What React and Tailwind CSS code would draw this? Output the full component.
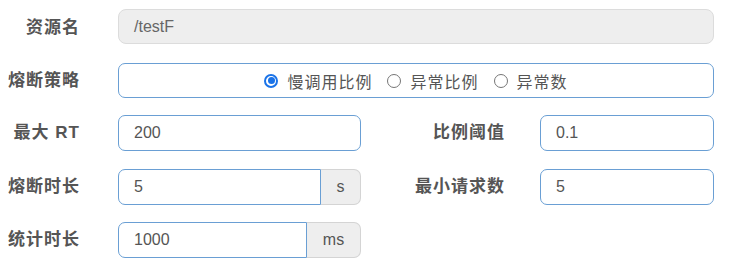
import React from 'react';

const labelCls =
  "text-right font-bold text-[17px] tracking-[1px] text-[#555] font-['Liberation_Sans','Noto_Sans_CJK_SC',sans-serif]";
const inputCls =
  "h-full rounded-[7px] border border-[#6a9fd4] bg-white px-[15px] text-[16px] text-[#555] outline-none font-['Liberation_Sans',sans-serif]";

const Radio = ({ checked, label }) => (
  <label className="flex items-center gap-[9px]">
    <span
      className={
        checked
          ? 'flex h-[14px] w-[14px] items-center justify-center rounded-full border-2 border-[#1a73e8] bg-white'
          : 'h-[14px] w-[14px] rounded-full border border-[#767676] bg-white'
      }
    >
      {checked && <span className="h-[7px] w-[7px] rounded-full bg-[#1a73e8]" />}
    </span>
    <span>{label}</span>
  </label>
);

const Addon = ({ value, unit, inputW, unitW }) => (
  <div className="flex h-[36px]">
    <div
      className={`${inputCls} flex items-center rounded-r-none`}
      style={{ width: inputW }}
    >
      {value}
    </div>
    <div
      className="flex h-full items-center justify-center rounded-r-[7px] border border-l-0 border-[#d4d4d4] bg-[#eeeeee] text-[16px] text-[#555] font-['Liberation_Sans',sans-serif]"
      style={{ width: unitW }}
    >
      {unit}
    </div>
  </div>
);

export default function App() {
  return (
    <div className="flex h-[268px] w-[743px] flex-col bg-white pt-[9px] font-['Liberation_Sans','Noto_Sans_CJK_SC',sans-serif]">
      {/* 资源名 */}
      <div className="flex h-[35px] items-center">
        <div className={`${labelCls} w-[80px] pt-[3px]`}>资源名</div>
        <div className="ml-[38px] flex h-full w-[596px] items-center rounded-[8px] border border-[#dcdcdc] bg-[#eeeeee] px-[15px] text-[16px] text-[#666] font-['Liberation_Sans',sans-serif]">
          /testF
        </div>
      </div>

      {/* 熔断策略 */}
      <div className="mt-[19px] flex h-[35px] items-center">
        <div className={`${labelCls} w-[80px]`}>熔断策略</div>
        <div className="ml-[38px] flex h-full w-[596px] items-center justify-center gap-[15px] rounded-[7px] border border-[#6a9fd4] bg-white text-[16px] tracking-[1px] text-[#555] font-['Noto_Sans_CJK_SC',sans-serif]">
          <Radio checked label="慢调用比例" />
          <Radio label="异常比例" />
          <Radio label="异常数" />
        </div>
      </div>

      {/* 最大 RT / 比例阈值 */}
      <div className="mt-[17px] flex h-[36px] items-center">
        <div className={`${labelCls} w-[80px]`}>最大 RT</div>
        <div className={`${inputCls} ml-[38px] flex w-[243px] items-center`}>200</div>
        <div className={`${labelCls} w-[144px]`}>比例阈值</div>
        <div className={`${inputCls} ml-[35px] flex w-[174px] items-center`}>0.1</div>
      </div>

      {/* 熔断时长 / 最小请求数 */}
      <div className="mt-[18px] flex h-[36px] items-center">
        <div className={`${labelCls} w-[80px]`}>熔断时长</div>
        <div className="ml-[38px]">
          <Addon value="5" unit="s" inputW={203} unitW={40} />
        </div>
        <div className={`${labelCls} w-[144px]`}>最小请求数</div>
        <div className={`${inputCls} ml-[35px] flex w-[174px] items-center`}>5</div>
      </div>

      {/* 统计时长 */}
      <div className="mt-[17px] flex h-[36px] items-center">
        <div className={`${labelCls} w-[80px]`}>统计时长</div>
        <div className="ml-[38px]">
          <Addon value="1000" unit="ms" inputW={189} unitW={54} />
        </div>
      </div>
    </div>
  );
}
